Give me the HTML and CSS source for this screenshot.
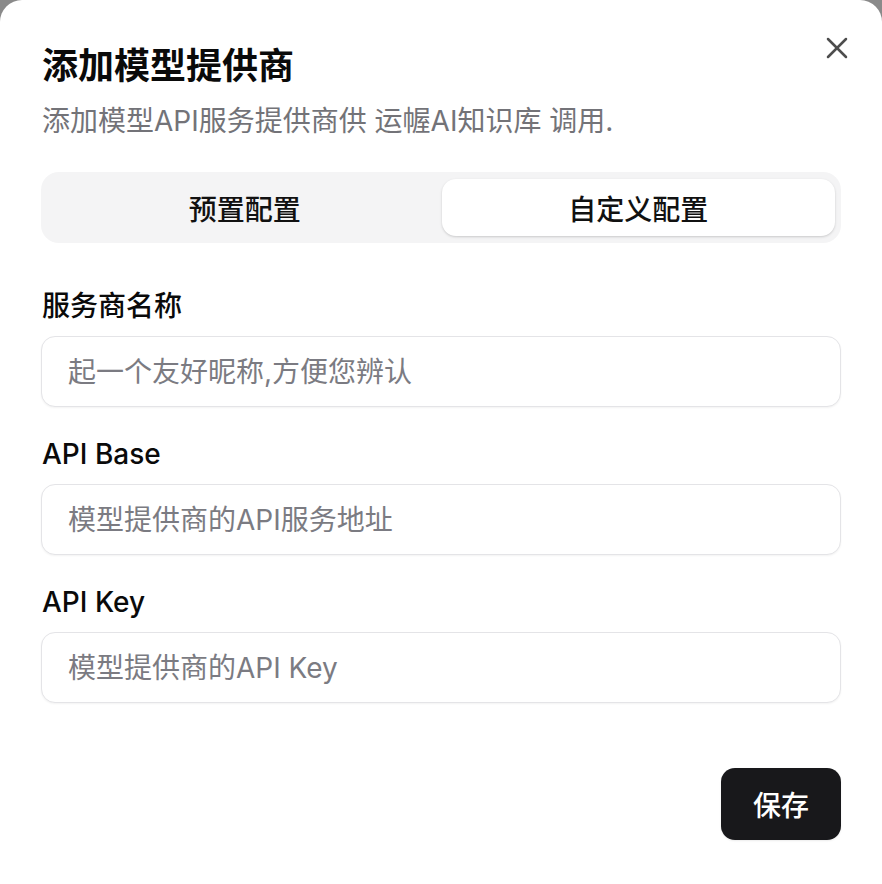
FILE: index.html
```html
<!DOCTYPE html>
<html lang="zh-CN">
<head>
<meta charset="utf-8">
<title>添加模型提供商</title>
<link rel="stylesheet" href="styles.css">
</head>
<body>
<div class="dialog">
  <button class="close" aria-label="关闭">
    <svg width="36" height="36" viewBox="0 0 24 24" fill="none" stroke="currentColor" stroke-width="1.7" stroke-linecap="round"><path d="M18 6 6 18"/><path d="m6 6 12 12"/></svg>
  </button>
  <h2 class="title">添加模型提供商</h2>
  <p class="desc">添加模型API服务提供商供 运幄AI知识库 调用.</p>
  <div class="tabs">
    <div class="tab">预置配置</div>
    <div class="tab active">自定义配置</div>
  </div>
  <div class="form">
    <div class="field">
      <label class="label">服务商名称</label>
      <input class="input" placeholder="起一个友好昵称,方便您辨认">
    </div>
    <div class="field">
      <label class="label">API Base</label>
      <input class="input" placeholder="模型提供商的API服务地址">
    </div>
    <div class="field">
      <label class="label">API Key</label>
      <input class="input" placeholder="模型提供商的API Key">
    </div>
  </div>
  <div class="footer">
    <button class="save">保存</button>
  </div>
</div>
</body>
</html>
```
FILE: styles.css
```css
* { box-sizing: border-box; }
html, body { margin: 0; padding: 0; }
body {
  background: #8a8a8a;
  font-family: "Inter", "Noto Sans CJK SC", sans-serif;
  color: #0a0a0a;
}
.dialog {
  position: relative;
  width: 882px;
  height: 884px;
  background: #fff;
  border-radius: 22px 22px 0 0;
  padding: 44px 41px 0 42px;
}
.close {
  position: absolute;
  left: 819px;
  top: 30px;
  width: 36px;
  height: 36px;
  padding: 0;
  border: 0;
  background: none;
  color: #4d4d4d;
  display: flex;
}
.title {
  margin: 0;
  font-size: 36px;
  line-height: 44px;
  font-weight: 700;
  color: #0a0a0a;
}
.desc {
  margin: 16px 0 0;
  font-size: 28px;
  line-height: 34px;
  color: #737378;
}
.tabs {
  margin-top: 34px;
  margin-left: -1px;
  height: 71px;
  padding: 7px 6px 7px 7px;
  background: #f4f4f5;
  border-radius: 18px;
  display: grid;
  grid-template-columns: 1fr 1fr;
}
.tab {
  display: flex;
  align-items: center;
  justify-content: center;
  font-size: 28px;
  font-weight: 500;
  color: #111;
  border-radius: 14px;
}
.tab.active {
  background: #fff;
  box-shadow: 0 1px 3px rgba(0,0,0,0.12), 0 1px 2px rgba(0,0,0,0.06);
}
.form {
  margin-top: 45px;
  display: flex;
  flex-direction: column;
  gap: 29px;
}
.field {
  display: flex;
  flex-direction: column;
  gap: 12px;
}
.label {
  font-size: 28px;
  line-height: 36px;
  font-weight: 500;
  color: #0a0a0a;
}
.input {
  margin-left: -1px;
  width: 800px;
  height: 71px;
  border: 1.5px solid #e4e4e7;
  border-radius: 14px;
  padding: 0 0 0 26px;
  font-family: inherit;
  font-size: 28px;
  color: #0a0a0a;
  background: #fff;
  box-shadow: 0 1px 2px rgba(0,0,0,0.05);
  outline: none;
}
.input::placeholder { color: #7b7b82; }
.footer {
  margin-top: 65px;
  display: flex;
  justify-content: flex-end;
}
.save {
  width: 120px;
  height: 72px;
  border: 0;
  border-radius: 14px;
  background: #18181b;
  color: #fff;
  font-family: inherit;
  font-size: 28px;
  font-weight: 500;
  box-shadow: 0 1px 2px rgba(0,0,0,0.08);
}
```
